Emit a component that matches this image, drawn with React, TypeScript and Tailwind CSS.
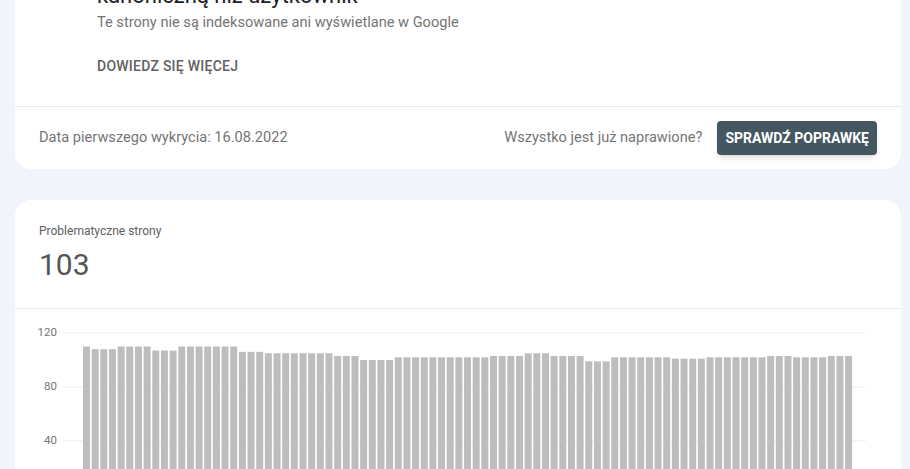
const bars: number[] = [
    110, 108, 108, 108, 110, 110, 110, 110, 107, 107, 107, 110, 110, 110, 110, 110, 110, 110,
    106, 106, 106,
    105, 105, 105, 105, 105, 105, 105, 105,
    103, 103, 103,
    100, 100, 100, 100,
    102, 102, 102, 102, 102, 102, 102, 102, 102, 102, 102,
    103, 103, 103, 103,
    105, 105, 105,
    103, 103, 103, 103,
    99, 99, 99,
    102, 102, 102, 102, 102, 102, 102,
    101, 101, 101, 101,
    102, 102, 102, 102, 102, 102, 102,
    103, 103, 103,
    102, 102, 102, 102,
    103, 103, 103,
];

function Chart() {
    const zeroY = 186;
    const scale = 1.35;
    const step = 8.66;
    const ticks = [120, 80, 40, 0];
    return (
        <svg width="886" height="200" viewBox="0 0 886 200" className="block">
            {ticks.map((t) => {
                const y = zeroY - t * scale;
                return (
                    <g key={t}>
                        <line x1="48" x2="851" y1={y} y2={y} stroke={t === 0 ? "#bdbdbd" : "#eeeeee"} strokeWidth="1"/>
                        {t > 0 && (
                            <text x="42" y={y} textAnchor="end" dominantBaseline="middle" fontSize="11.5"
                                  fill="#757575" fontFamily="Roboto, Arial, sans-serif">
                                {t}
                            </text>
                        )}
                    </g>
                );
            })}
            {bars.map((v, i) => {
                const h = v * scale;
                return <rect key={i} x={68 + i * step} y={zeroY - h} width="7" height={h} fill="#bdbdbd"/>;
            })}
        </svg>
    );
}

export default function App() {
    return (
        <div className="min-h-[469px] bg-[#f1f4fa] pl-[15px] pr-[9px] pb-10 font-['Roboto',Arial,sans-serif]">
            {/* issue card, top is scrolled off */}
            <div className="bg-white rounded-b-2xl -mt-[18px]">
                <div className="pl-[82px] pr-6">
                    <h1 className="text-[22px] leading-[28px] text-[#202124]">kanoniczną niż użytkownik</h1>
                    <p className="text-[14.6px] leading-5 text-[#757575] mt-[2px]">
                        Te strony nie są indeksowane ani wyświetlane w Google
                    </p>
                    <div className="pt-[22px] pb-[28px]">
                        <span className="text-sm leading-5 font-medium tracking-[0.25px] text-[#616161]">
                            DOWIEDZ SIĘ WIĘCEJ
                        </span>
                    </div>
                </div>
                <div className="border-t border-[#e8e8e8] flex items-center justify-between px-6 h-[63px]">
                    <span className="text-[14.6px] text-[#757575]">Data pierwszego wykrycia: 16.08.2022</span>
                    <div className="flex items-center gap-[15px]">
                        <span className="text-[14.6px] text-[#757575]">Wszystko jest już naprawione?</span>
                        <button
                            className="h-[34px] px-2 rounded bg-[#44565f] text-white text-sm font-bold shadow-md">
                            SPRAWDŹ POPRAWKĘ
                        </button>
                    </div>
                </div>
            </div>

            {/* chart card */}
            <div className="bg-white rounded-2xl mt-[31px]">
                <div className="px-6 pt-[23px] pb-[25px]">
                    <div className="text-xs leading-4 text-[#616161]">Problematyczne strony</div>
                    <div className="text-[30px] leading-9 text-[#555555] mt-2">103</div>
                </div>
                <div className="border-t border-[#e8e8e8]">
                    <Chart/>
                </div>
            </div>
        </div>
    );
}
